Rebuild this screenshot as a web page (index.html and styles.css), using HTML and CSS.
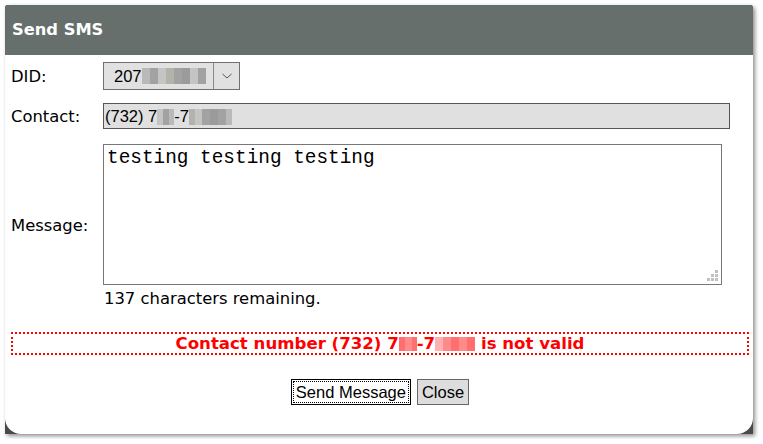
FILE: index.html
```html
<!DOCTYPE html>
<html>
<head>
<meta charset="utf-8">
<link rel="stylesheet" href="styles.css">
</head>
<body>
<div class="dialog">
  <div class="header">Send SMS</div>
  <div class="body">
    <div class="form">
      <div class="label">DID:</div>
      <div class="field">
        <div class="select">
          <span class="select-text">207<span class="mosaic"><i class="g1"></i><i class="g2"></i><i class="g3"></i><i class="g4"></i><i class="g2"></i><i class="g5"></i><i class="g3"></i><i class="g2"></i></span></span>
          <span class="select-arrow"><svg width="12" height="8" viewBox="0 0 12 8"><path d="M1.5 2 L6 6 L10.5 2" fill="none" stroke="#555" stroke-width="1"/></svg></span>
        </div>
      </div>
      <div class="label">Contact:</div>
      <div class="field">
        <div class="input">(732) 7<span class="mosaic"><i class="g3 w6"></i><i class="g2 w6"></i><i class="g1 w5"></i></span>-7<span class="mosaic"><i class="g4 w6"></i><i class="g3 w7"></i><i class="g2 w8"></i><i class="g5 w8"></i><i class="g2 w8"></i><i class="g1 w6"></i></span></div>
      </div>
      <div class="label">Message:</div>
      <div class="field msg-field">
        <div class="textarea">testing testing testing
          <span class="grip"><i></i><i></i><i></i><i></i><i></i><i></i></span>
        </div>
        <div class="remaining">137 characters remaining.</div>
      </div>
    </div>
    <div class="error">Contact number (732) 7<span class="mosaic red"><i class="p1 w6"></i><i class="p2 w7"></i><i class="p1 w5"></i></span>-7<span class="mosaic red"><i class="p3 w8"></i><i class="p2 w8"></i><i class="p1 w8"></i><i class="p2 w8"></i><i class="p1 w8"></i></span> is not valid</div>
    <div class="buttons">
      <button class="btn primary"><span class="focus">Send Message</span></button>
      <button class="btn">Close</button>
    </div>
  </div>
</div>
</body>
</html>
```

FILE: styles.css
```css
html, body {
  margin: 0;
  padding: 0;
  background: #ffffff;
}
body {
  padding: 5px;
}
.dialog {
  width: 748px;
  height: 429px;
  background: #4a4a4a;
  border-radius: 3px 3px 0 0;
  box-shadow: 2px 2px 4px rgba(0, 0, 0, 0.45);
  display: flex;
  flex-direction: column;
}
.header {
  height: 50px;
  background: #676f6c;
  border-radius: 3px 3px 0 0;
  color: #ffffff;
  font-family: "DejaVu Sans", Verdana, sans-serif;
  font-weight: bold;
  font-size: 16.3px;
  line-height: 50px;
  padding-left: 7px;
}
.body {
  flex: 1;
  background: #ffffff;
  border-radius: 0 0 16px 16px;
  font-family: "DejaVu Sans", Verdana, sans-serif;
  font-size: 16.4px;
  color: #000;
  padding: 7px 4px 0 6px;
}
.form {
  display: grid;
  grid-template-columns: 92px 1fr;
  row-gap: 13px;
  align-items: center;
  padding-right: 19px;
}
.label {
  font-size: 16.4px;
}
.select {
  width: 137px;
  height: 28px;
  box-sizing: border-box;
  border: 1px solid #707070;
  background: #e1e1e1;
  display: flex;
  font-family: "Liberation Sans", Arial, sans-serif;
  font-size: 16.5px;
}
.select-text {
  flex: 1;
  display: flex;
  align-items: center;
  padding-left: 10px;
}
.select-arrow {
  width: 25px;
  border-left: 1px solid #8a8a8a;
  display: flex;
  align-items: center;
  justify-content: center;
}
.mosaic {
  display: inline-flex;
  height: 16px;
  vertical-align: -3px;
}
.mosaic i {
  display: block;
  width: 8px;
  height: 16px;
}
.mosaic i.w5 { width: 5px; }
.mosaic i.w6 { width: 6px; }
.mosaic i.w7 { width: 7px; }
.mosaic i.w8 { width: 8px; }
.g1 { background: #b9b9b9; }
.g2 { background: #a2a2a2; }
.g3 { background: #c4c4c4; }
.g4 { background: #b3b3ab; }
.g5 { background: #9b9b9b; }
.p1 { background: #ff6f6f; }
.p2 { background: #ff8a8a; }
.p3 { background: #ffb0b0; }
.input {
  height: 26px;
  box-sizing: border-box;
  border: 1px solid #555555;
  background: #e0e0e0;
  font-family: "Liberation Sans", Arial, sans-serif;
  font-size: 16.5px;
  line-height: 24px;
  padding-left: 1px;
}
.msg-field {
  padding-top: 2px;
}
.textarea {
  position: relative;
  width: 619px;
  height: 141px;
  box-sizing: border-box;
  border: 1px solid #777777;
  background: #ffffff;
  font-family: "Liberation Mono", "Courier New", monospace;
  font-size: 19.4px;
  line-height: 22px;
  padding: 2px 3px;
  white-space: pre;
}
.grip {
  position: absolute;
  right: 3px;
  bottom: 3px;
  width: 11px;
  height: 11px;
}
.grip i {
  position: absolute;
  width: 3px;
  height: 3px;
  background: #c0c0c0;
}
.grip i:nth-child(1) { right: 0; bottom: 8px; }
.grip i:nth-child(2) { right: 0; bottom: 4px; }
.grip i:nth-child(3) { right: 4px; bottom: 4px; }
.grip i:nth-child(4) { right: 0; bottom: 0; }
.grip i:nth-child(5) { right: 4px; bottom: 0; }
.grip i:nth-child(6) { right: 8px; bottom: 0; }
.remaining {
  margin-top: 4px;
  padding-left: 1px;
  line-height: 19px;
}
.error {
  margin-top: 24px;
  height: 23px;
  box-sizing: border-box;
  border: 2px dotted #ff0000;
  color: #ff0000;
  font-weight: bold;
  font-size: 16.6px;
  line-height: 19px;
  text-align: center;
}
.error .mosaic {
  height: 14px;
  vertical-align: -2px;
}
.error .mosaic i { height: 14px; }
.buttons {
  display: flex;
  justify-content: center;
  gap: 6px;
  margin-top: 24px;
}
.btn {
  height: 26px;
  margin: 0;
  box-sizing: border-box;
  border: 1px solid #666666;
  background: #dddddd;
  font-family: "Liberation Sans", Arial, sans-serif;
  font-size: 16.5px;
  color: #000;
  padding: 0 4px;
  border-radius: 0;
}
.btn.primary {
  border: 1px solid #000000;
  background: #ffffff;
  padding: 1px;
}
.btn.primary .focus {
  display: block;
  height: 100%;
  box-sizing: border-box;
  border: 1px dotted #000000;
  padding: 0 2px;
  line-height: 20px;
}
```
